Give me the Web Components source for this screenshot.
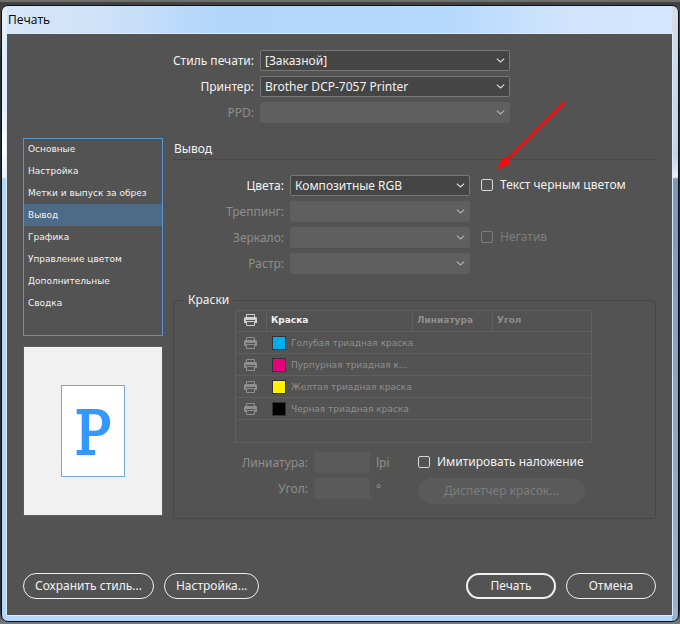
<!DOCTYPE html>
<html lang="ru">
<head>
<meta charset="utf-8">
<meta name="viewport" content="width=device-width, initial-scale=1">
<title>Печать</title>
<style>
  html {
    --ui-font: "Noto Sans", sans-serif;
    --small-font: "DejaVu Sans", sans-serif;
    --panel: #535353;
    --text: #f2f2f2;
    --muted: #8e8e8e;
    --control: #454545;
    --control-line: #777;
    --control-off: #5f5f5f;
    --line: #484848;
    --grid-line: #5f5f5f;
    --accent: #5694d2;
  }

  body {
    margin: 0;
    font: 12px/21px var(--ui-font);
    color: var(--text);
    background: linear-gradient(#6d6d69 0 2px, #424242 2px 40px, #252a30 60px, #252a30 610px, #77777b 622px);
  }
</style>
</head>
<body>
<print-dialog></print-dialog>

<script>
class PrintDialog extends HTMLElement {
  constructor() {
    super();
    this.shadowDOM = this.attachShadow({ mode: 'open' });
  }

  connectedCallback() {
    this.render();
  }

  render() {
    this.shadowDOM.innerHTML = `
        <style>
            :host {
                display: flex;
                box-sizing: border-box;
                min-height: 100vh;
                padding: 5px 1px 2px;
            }

            .frame {
                flex: 1;
                display: flex;
                flex-direction: column;
                padding: 0 6px 6px 5px;
                border: 1px solid #0d1117;
                border-radius: 7px;
                background:
                    linear-gradient(#d5dde8, #c3d3e6 150px, #e9f0f7 171px, #7f97b5 173px, #9bb2ce) right / 6px 100% no-repeat,
                    linear-gradient(#e4effc 0 100px, #fff 140px, #eaf4fe 171px, #b4d6fb 173px) left / 5px 100% no-repeat,
                    linear-gradient(90deg, #d7e6f8, #cfe2f8 100px, #b1d5fb 220px, #b5d8fc 440px, #cfe4fc 560px, #d3e6fc) top / 100% 28px no-repeat,
                    #b8d9fb;
            }

            .title {
                margin: 0;
                padding: 3px 1px 4px;
                font: 12px/21px "Open Sans", sans-serif;
                color: #000;
            }

            .content {
                flex: 1;
                display: flex;
                flex-direction: column;
                padding: 16px;
                background: var(--panel);
                box-shadow: 0 0 0 1px #dcebf9;
            }

            .presets {
                display: grid;
                gap: 5px;
                --label: 231px;
                --field: 250px;
            }

            .main {
                display: grid;
                grid-template-columns: 140px minmax(0, 1fr);
                gap: 10px;
                margin-top: 15px;
            }

            .side {
                display: flex;
                flex-direction: column;
                gap: 10px;
            }

            .footer {
                display: flex;
                gap: 10px;
                margin-top: auto;
                padding-top: 20px;
            }

            .spacer {
                flex: 1;
            }
        </style>
        <section class="frame" aria-label="Печать">
            <h1 class="title">Печать</h1>
            <div class="content">
                <div class="presets">
                    <select-field label="Стиль печати:" value="[Заказной]"></select-field>
                    <select-field label="Принтер:" value="Brother DCP-7057 Printer"></select-field>
                    <select-field label="PPD:" disabled></select-field>
                </div>
                <div class="main">
                    <div class="side">
                        <section-list></section-list>
                        <page-preview></page-preview>
                    </div>
                    <output-panel></output-panel>
                </div>
                <div class="footer">
                    <pill-button>Сохранить стиль...</pill-button>
                    <pill-button>Настройка...</pill-button>
                    <span class="spacer"></span>
                    <pill-button class="wide" primary>Печать</pill-button>
                    <pill-button class="wide">Отмена</pill-button>
                </div>
            </div>
        </section>
        <pointer-arrow></pointer-arrow>
        `;
  }
}

class SelectField extends HTMLElement {
  constructor() {
    super();
    this.shadowDOM = this.attachShadow({ mode: 'open' });
  }

  connectedCallback() {
    this.render();
  }

  render() {
    const off = this.hasAttribute('disabled') ? 'disabled' : '';
    const value = this.getAttribute('value') || '';
    this.shadowDOM.innerHTML = `
        <style>
            :host {
                display: grid;
                grid-template-columns: var(--label) var(--field);
                column-gap: 6px;
                align-items: center;
            }

            :host([disabled]) {
                color: var(--muted);
            }

            label {
                text-align: right;
            }

            .box {
                display: grid;
                align-items: center;
            }

            select, svg {
                grid-area: 1 / 1;
            }

            select {
                appearance: none;
                box-sizing: border-box;
                width: 100%;
                height: 21px;
                margin: 0;
                padding: 0 20px 0 4px;
                border: 1px solid var(--control-line);
                border-radius: 2px;
                font: inherit;
                line-height: 19px;
                color: inherit;
                background: var(--control);
            }

            select:disabled {
                border-color: var(--control-off);
                background: var(--control-off);
                opacity: 1;
            }

            svg {
                justify-self: end;
                margin-right: 5px;
                pointer-events: none;
                color: #dcdcdc;
            }

            :host([disabled]) svg {
                color: #b0b0b0;
            }
        </style>
        <label for="field">${this.getAttribute('label')}</label>
        <div class="box">
            <select id="field" ${off}><option>${value}</option></select>
            <svg width="9" height="5" viewBox="0 0 9 5" fill="none" stroke="currentColor" stroke-width="1.2" aria-hidden="true">
                <path d="M.8.6 4.5 4 8.2.6"/>
            </svg>
        </div>
        `;
  }
}

class CheckField extends HTMLElement {
  constructor() {
    super();
    this.shadowDOM = this.attachShadow({ mode: 'open' });
  }

  connectedCallback() {
    this.render();
  }

  render() {
    const off = this.hasAttribute('disabled') ? 'disabled' : '';
    this.shadowDOM.innerHTML = `
        <style>
            :host {
                display: block;
            }

            label {
                display: flex;
                align-items: center;
                gap: 7px;
                line-height: 20px;
                white-space: nowrap;
            }

            :host([disabled]) label {
                color: #7d7d7d;
            }

            input {
                appearance: none;
                box-sizing: border-box;
                width: 12px;
                height: 12px;
                margin: 0;
                border: 1px solid #d8d8d8;
                border-radius: 2px;
            }

            input:checked {
                background: #d8d8d8;
            }

            input:disabled {
                border-color: #7d7d7d;
            }
        </style>
        <label><input type="checkbox" ${off}><slot></slot></label>
        `;
  }
}

class NumberField extends HTMLElement {
  constructor() {
    super();
    this.shadowDOM = this.attachShadow({ mode: 'open' });
  }

  connectedCallback() {
    this.render();
  }

  render() {
    this.shadowDOM.innerHTML = `
        <style>
            :host {
                display: grid;
                grid-template-columns: 72px 56px 35px;
                column-gap: 6px;
                align-items: center;
                color: var(--muted);
            }

            label {
                text-align: right;
            }

            input {
                box-sizing: border-box;
                width: 100%;
                height: 21px;
                margin: 0;
                padding: 0 4px;
                border: 0;
                border-radius: 2px;
                font: inherit;
                color: inherit;
                background: #5a5a5a;
            }
        </style>
        <label for="field">${this.getAttribute('label')}</label>
        <input id="field" type="text" disabled>
        <span>${this.getAttribute('unit')}</span>
        `;
  }
}

class PillButton extends HTMLElement {
  constructor() {
    super();
    this.shadowDOM = this.attachShadow({ mode: 'open' });
  }

  connectedCallback() {
    this.render();
  }

  render() {
    const off = this.hasAttribute('disabled') ? 'disabled' : '';
    this.shadowDOM.innerHTML = `
        <style>
            :host {
                display: block;
            }

            button {
                box-sizing: border-box;
                width: 100%;
                height: 26px;
                padding: 0 11px;
                border: 1px solid #f0f0f0;
                border-radius: 13px;
                font: inherit;
                line-height: 22px;
                color: inherit;
                background: none;
                white-space: nowrap;
            }

            :host(.wide) button {
                min-width: 90px;
            }

            :host([primary]) button {
                border-width: 2px;
            }

            button:disabled {
                padding: 0 25px;
                border-color: #5a5a5a;
                color: #7d7d7d;
                background: #5a5a5a;
            }
        </style>
        <button type="button" ${off}><slot></slot></button>
        `;
  }
}

class SectionList extends HTMLElement {
  constructor() {
    super();
    this.shadowDOM = this.attachShadow({ mode: 'open' });
    this.items = [
      'Основные',
      'Настройка',
      'Метки и выпуск за обрез',
      'Вывод',
      'Графика',
      'Управление цветом',
      'Дополнительные',
      'Сводка',
    ];
    this.selected = 'Вывод';
  }

  connectedCallback() {
    this.render();
  }

  render() {
    const rows = this.items.map((item) => `
            <li><button type="button" ${item === this.selected ? 'aria-current="true"' : ''}>${item}</button></li>`).join('');
    this.shadowDOM.innerHTML = `
        <style>
            :host {
                display: block;
            }

            ul {
                margin: 0;
                padding: 0 0 22px;
                list-style: none;
                outline: 1px solid var(--accent);
                outline-offset: -1px;
            }

            button {
                display: block;
                width: 100%;
                height: 22px;
                padding: 0 5px;
                border: 0;
                font: 9px/22px var(--small-font);
                color: inherit;
                text-align: left;
                white-space: nowrap;
                background: none;
            }

            button[aria-current] {
                background: #4d6a87;
            }
        </style>
        <ul>${rows}</ul>
        `;
  }
}

class PagePreview extends HTMLElement {
  constructor() {
    super();
    this.shadowDOM = this.attachShadow({ mode: 'open' });
  }

  connectedCallback() {
    this.render();
  }

  render() {
    this.shadowDOM.innerHTML = `
        <style>
            :host {
                display: grid;
                place-items: center;
                box-sizing: border-box;
                height: 170px;
                border: 1px solid #5c5c5c;
                background: #f1f1f1;
            }

            .page {
                box-sizing: border-box;
                width: 64px;
                height: 92px;
                border: 1px solid #7aa7d8;
                font: 60px/94px "DejaVu Serif Condensed", "DejaVu Serif", serif;
                text-align: center;
                color: #3399ff;
                -webkit-text-stroke: 2px #3399ff;
                background: #fff;
            }
        </style>
        <div class="page">P</div>
        `;
  }
}

class OutputPanel extends HTMLElement {
  constructor() {
    super();
    this.shadowDOM = this.attachShadow({ mode: 'open' });
  }

  connectedCallback() {
    this.render();
  }

  render() {
    this.shadowDOM.innerHTML = `
        <style>
            :host {
                display: block;
            }

            h2 {
                margin: 0;
                padding-left: 1px;
                border-bottom: 1px solid var(--line);
                font: inherit;
            }

            .options {
                display: grid;
                grid-template-columns: auto 1fr;
                gap: 5px 11px;
                margin-top: 15px;
                --label: 111px;
                --field: 180px;
            }

            .options select-field {
                grid-column: 1;
            }

            fieldset {
                min-width: 0;
                margin: 18px 0 0;
                padding: 2px 14px 14px 61px;
                border: 1px solid var(--line);
                border-radius: 3px;
            }

            legend {
                margin-left: -51px;
                padding: 0 4px;
                line-height: 16px;
            }

            .details {
                display: grid;
                grid-template-columns: auto 1fr;
                gap: 5px 7px;
                margin: 9px 0 0 1px;
            }

            .details > * {
                justify-self: start;
            }

            .details number-field {
                grid-column: 1;
                height: 21px;
            }

            .details pill-button {
                height: 26px;
            }
        </style>
        <h2>Вывод</h2>
        <div class="options">
            <select-field label="Цвета:" value="Композитные RGB"></select-field>
            <check-field>Текст черным цветом</check-field>
            <select-field label="Треппинг:" disabled></select-field>
            <select-field label="Зеркало:" disabled></select-field>
            <check-field disabled>Негатив</check-field>
            <select-field label="Растр:" disabled></select-field>
        </div>
        <fieldset>
            <legend>Краски</legend>
            <ink-table></ink-table>
            <div class="details">
                <number-field label="Линиатура:" unit="lpi"></number-field>
                <check-field>Имитировать наложение</check-field>
                <number-field label="Угол:" unit="°"></number-field>
                <pill-button disabled>Диспетчер красок...</pill-button>
            </div>
        </fieldset>
        `;
  }
}

class InkTable extends HTMLElement {
  constructor() {
    super();
    this.shadowDOM = this.attachShadow({ mode: 'open' });
    this.inks = [
      { name: 'Голубая триадная краска', color: '#00aeef' },
      { name: 'Пурпурная триадная к...', color: '#e5007e' },
      { name: 'Желтая триадная краска', color: '#fff200' },
      { name: 'Черная триадная краска', color: '#000' },
    ];
  }

  connectedCallback() {
    this.render();
  }

  render() {
    const icon = `
            <svg width="13" height="12" viewBox="0 0 13 12" aria-hidden="true">
                <path d="M2.5 3V.5h8V3" fill="none" stroke="currentColor"/>
                <path d="M1 3h11l1 1v5h-2V6H2v3H0V4z" fill="currentColor"/>
                <path d="M2.5 7.500v4h8v-4z" fill="none" stroke="currentColor"/>
            </svg>`;
    const rows = this.inks.map((ink) => `
            <tr>
                <td class="mark">${icon}</td>
                <td colspan="3"><span class="ink"><i style="background: ${ink.color}"></i>${ink.name}</span></td>
            </tr>`).join('');
    this.shadowDOM.innerHTML = `
        <style>
            :host {
                display: block;
            }

            table {
                box-sizing: border-box;
                width: 357px;
                max-width: 100%;
                table-layout: fixed;
                border: 1px solid var(--grid-line);
                border-spacing: 0;
                font: 9px/20px var(--small-font);
                color: var(--muted);
            }

            th, td {
                box-sizing: border-box;
                height: 22px;
                padding: 0 0 0 4px;
                border-bottom: 1px solid var(--grid-line);
                text-align: left;
                white-space: nowrap;
            }

            th {
                height: 21px;
                line-height: 18px;
                vertical-align: top;
                border-right: 1px solid var(--grid-line);
            }

            th:last-child {
                border-right: 0;
            }

            th.name {
                color: var(--text);
            }

            th.mark {
                padding-top: 3px;
                color: #d0d0d0;
            }

            .mark {
                padding-left: 8px;
            }

            .mark svg {
                display: block;
            }

            .ink {
                display: flex;
                align-items: center;
                gap: 5px;
                padding-left: 1px;
            }

            .ink i {
                box-sizing: border-box;
                width: 14px;
                height: 14px;
                border: 1px solid #333;
            }

            .blank td {
                border-bottom: 0;
            }
        </style>
        <table>
            <colgroup>
                <col style="width: 31px"><col style="width: 146px"><col style="width: 80px"><col>
            </colgroup>
            <thead>
                <tr>
                    <th class="mark" aria-label="Печать">${icon}</th>
                    <th class="name">Краска</th>
                    <th>Линиатура</th>
                    <th>Угол</th>
                </tr>
            </thead>
            <tbody>
                ${rows}
                <tr class="blank"><td colspan="4"></td></tr>
            </tbody>
        </table>
        `;
  }
}

// Callout laid over the dialog, its tip just above the first tick box.
class PointerArrow extends HTMLElement {
  constructor() {
    super();
    this.shadowDOM = this.attachShadow({ mode: 'open' });
  }

  connectedCallback() {
    this.render();
  }

  render() {
    this.shadowDOM.innerHTML = `
        <style>
            :host {
                position: absolute;
                left: 495px;
                top: 100px;
                pointer-events: none;
            }

            svg {
                display: block;
            }
        </style>
        <svg width="72" height="72" viewBox="0 0 72 72" aria-hidden="true">
            <path d="M69.500 2.500 11 61" stroke="#f50b0b" stroke-width="3"/>
            <path d="M2 70 8 57 11 57.500 15 61.500 14.500 64z" fill="#f50b0b"/>
        </svg>
        `;
  }
}

customElements.define('select-field', SelectField);
customElements.define('check-field', CheckField);
customElements.define('number-field', NumberField);
customElements.define('pill-button', PillButton);
customElements.define('section-list', SectionList);
customElements.define('page-preview', PagePreview);
customElements.define('ink-table', InkTable);
customElements.define('output-panel', OutputPanel);
customElements.define('pointer-arrow', PointerArrow);
customElements.define('print-dialog', PrintDialog);
</script>
</body>
</html>
